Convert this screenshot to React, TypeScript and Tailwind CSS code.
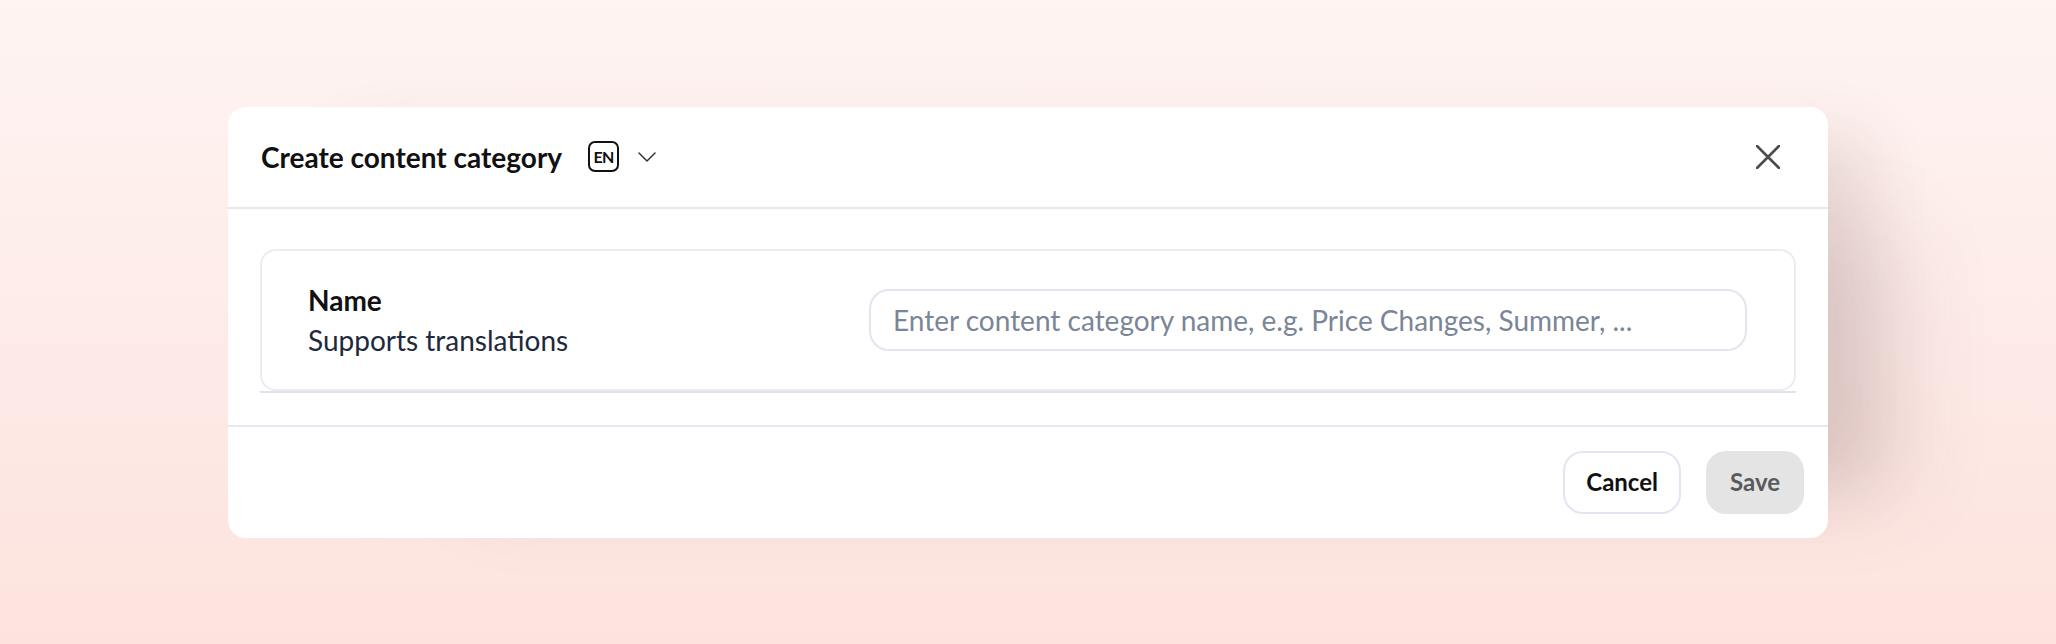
export default function App() {
  return (
    <main
      className="flex h-screen w-full items-center justify-center bg-gradient-to-b from-[#fef4f2] to-[#fde3de]"
      style={{ fontFamily: "Lato, 'Noto Sans', sans-serif" }}
    >
      <div className="w-[1600px] overflow-hidden rounded-[18px] bg-white shadow-[80px_-10px_60px_-40px_rgba(90,60,60,0.12),160px_40px_90px_-80px_rgba(90,60,60,0.10)]">
        {/* header */}
        <header className="flex h-[102px] items-center border-b-2 border-[#e8e8f2] pl-[33px] pr-[48px]">
          <h1 className="text-[28px] font-bold leading-none text-[#111111]">Create content category</h1>
          <span className="ml-[26px] flex h-[31px] w-[31px] items-center justify-center rounded-[7px] border-2 border-[#111111] text-[16px] font-bold leading-none tracking-[-0.5px] text-[#111111]">
            EN
          </span>
          <svg className="ml-[19px]" width="18" height="10" viewBox="0 0 18 10" fill="none">
            <polyline points="1,1 9,9 17,1" stroke="#333" strokeWidth="1.5" strokeLinecap="round" strokeLinejoin="round" />
          </svg>
          <button className="ml-auto flex h-[24px] w-[24px] items-center justify-center" aria-label="Close">
            <svg width="24" height="24" viewBox="0 0 24 24" fill="none">
              <path d="M1 1L23 23M23 1L1 23" stroke="#4b4b4b" strokeWidth="2.6" strokeLinecap="round" />
            </svg>
          </button>
        </header>

        {/* body */}
        <section className="px-8 pb-8 pt-10">
          <div className="border-b-2 border-[#e0e3ea]">
            <div className="flex h-[142px] items-center rounded-[16px] border-2 border-[#ebebf2] pl-[46px] pr-[47px]">
              <div className="w-[561px] shrink-0 text-[28px] leading-[40px]">
                <p className="font-bold text-[#111111]">Name</p>
                <p className="text-[#1e2a3b]">Supports translations</p>
              </div>
              <input
                type="text"
                placeholder="Enter content category name, e.g. Price Changes, Summer, ..."
                className="h-[62px] flex-1 rounded-[20px] border-2 border-[#e3e4f0] bg-white px-[22px] text-[28px] text-[#111] outline-none placeholder:text-[#7b8598]"
              />
            </div>
          </div>
        </section>

        {/* footer */}
        <footer className="flex items-center justify-end gap-[25px] border-t-2 border-[#e8e8f2] p-6">
          <button className="h-[63px] rounded-[20px] border-2 border-[#e4e4f3] bg-white px-[21px] text-[24px] font-bold text-[#111111]">
            Cancel
          </button>
          <button className="h-[63px] rounded-[20px] bg-[#e4e4e4] px-6 text-[24px] font-bold text-[#5a5a5a]">
            Save
          </button>
        </footer>
      </div>
    </main>
  );
}
